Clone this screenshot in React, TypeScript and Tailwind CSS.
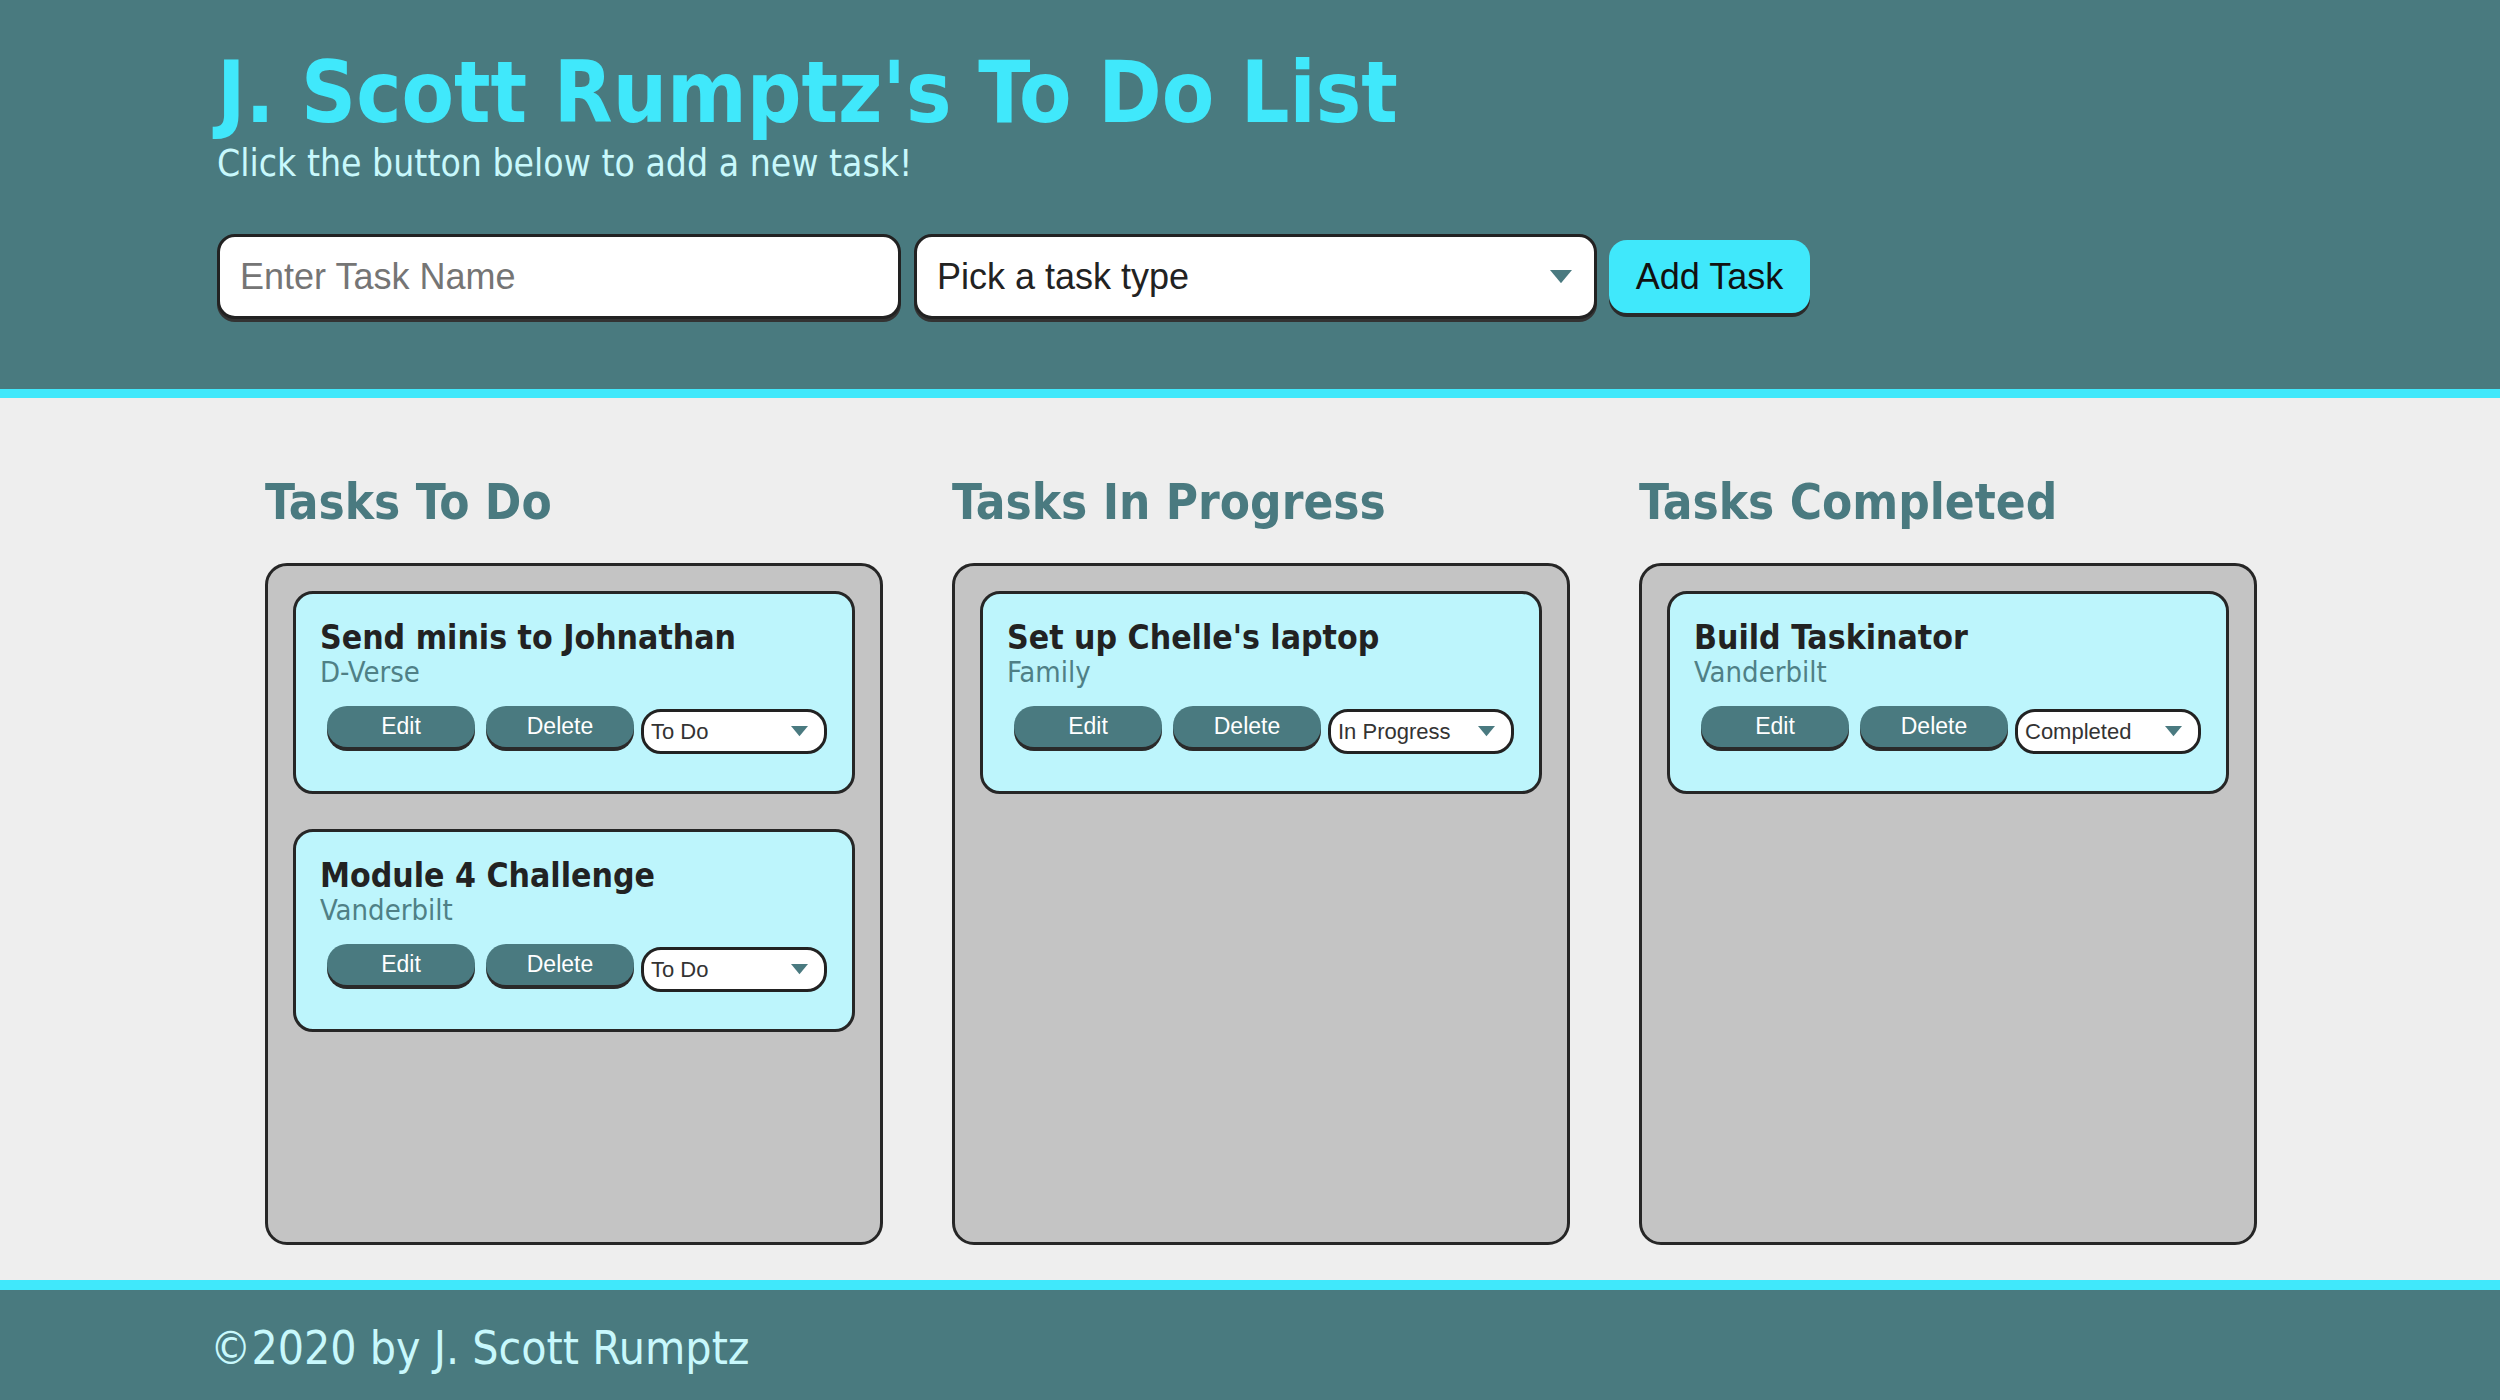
import type { ReactNode } from "react";

const HEAD = { fontFamily: '"DejaVu Sans Condensed", "DejaVu Sans", Verdana, sans-serif' };
const ARIAL = { fontFamily: '"Liberation Sans", Arial, sans-serif' };

type Task = { name: string; type: string; status: string };

const columns: { title: string; tasks: Task[] }[] = [
  {
    title: "Tasks To Do",
    tasks: [
      { name: "Send minis to Johnathan", type: "D-Verse", status: "To Do" },
      { name: "Module 4 Challenge", type: "Vanderbilt", status: "To Do" },
    ],
  },
  {
    title: "Tasks In Progress",
    tasks: [{ name: "Set up Chelle's laptop", type: "Family", status: "In Progress" }],
  },
  {
    title: "Tasks Completed",
    tasks: [{ name: "Build Taskinator", type: "Vanderbilt", status: "Completed" }],
  },
];

function Caret({ size = 14 }: { size?: number }) {
  return (
    <svg width={size} height={size * 0.6} viewBox="0 0 10 6" className="shrink-0">
      <path d="M0 0 L10 0 L5 6 Z" fill="#4a7a80" />
    </svg>
  );
}

function SmallBtn({ children }: { children: ReactNode }) {
  return (
    <button
      style={ARIAL}
      className="h-[41px] w-[148px] rounded-[20px] bg-[#4a7a80] text-[23px] text-white shadow-[0_4px_0_#2a2a2a]"
    >
      {children}
    </button>
  );
}

function TaskCard({ task }: { task: Task }) {
  return (
    <div className="h-[203px] rounded-[20px] border-[3px] border-[#262626] bg-[#bdf5fc] pl-[24px] pr-[20px] pt-[26px]">
      <h3 style={HEAD} className="text-[33.5px] font-bold leading-[36px] text-[#222]">
        {task.name}
      </h3>
      <p style={HEAD} className="text-[29px] leading-[32px] text-[#4f8086]">
        {task.type}
      </p>
      <div className="mt-[18px] flex items-start pl-[7px]">
        <SmallBtn>Edit</SmallBtn>
        <div className="w-[11px]" />
        <SmallBtn>Delete</SmallBtn>
        <div className="w-[7px]" />
        <div
          style={ARIAL}
          className="mt-[3px] flex h-[45px] w-[186px] items-center justify-between rounded-[20px] border-[3px] border-[#222] bg-white pl-[7px] pr-[16px] text-[22px] text-[#333]"
        >
          <span>{task.status}</span>
          <Caret size={17} />
        </div>
      </div>
    </div>
  );
}

export default function App() {
  return (
    <div className="flex min-h-screen flex-col bg-[#eeeeee]">
      <header className="h-[398px] shrink-0 border-b-[9px] border-[#40e8fb] bg-[#497a7f] pl-[217px] pt-[50px]">
        <h1 style={HEAD} className="text-[85px] font-bold leading-none text-[#40e8fb]">
          J. Scott Rumptz's To Do List
        </h1>
        <p style={HEAD} className="mt-[9px] text-[37px] leading-[40px] text-[#c8f8fc]">
          Click the button below to add a new task!
        </p>
        <div className="mt-[50px] flex items-center">
          <input
            style={ARIAL}
            placeholder="Enter Task Name"
            className="h-[85px] w-[684px] rounded-[18px] border-[3px] border-[#222] bg-white px-[20px] text-[36px] text-[#222] shadow-[0_3px_0_#333] outline-none placeholder:text-[#757575]"
          />
          <div
            style={ARIAL}
            className="ml-[13px] flex h-[85px] w-[683px] items-center justify-between rounded-[18px] border-[3px] border-[#222] bg-white pl-[20px] pr-[22px] text-[36px] text-[#222] shadow-[0_3px_0_#333]"
          >
            <span>Pick a task type</span>
            <Caret size={22} />
          </div>
          <button
            style={ARIAL}
            className="ml-[12px] h-[73px] w-[201px] rounded-[18px] bg-[#40e8fb] text-[36px] text-[#111] shadow-[0_4px_0_#2a2a2a]"
          >
            Add Task
          </button>
        </div>
      </header>

      <main className="flex-1 pl-[265px] pt-[80px]">
        <div className="grid grid-cols-[618px_618px_618px] gap-x-[69px]">
          {columns.map((col) => (
            <section key={col.title}>
              <h2 style={HEAD} className="h-[85px] text-[49px] font-bold leading-[49px] text-[#4a7a80]">
                {col.title}
              </h2>
              <div className="flex h-[682px] flex-col gap-[35px] rounded-[22px] border-[3px] border-[#262626] bg-[#c4c4c4] p-[25px]">
                {col.tasks.map((t) => (
                  <TaskCard key={t.name} task={t} />
                ))}
              </div>
            </section>
          ))}
        </div>
      </main>

      <footer className="flex h-[120px] shrink-0 items-center border-t-[10px] border-[#40e8fb] bg-[#497a7f] pl-[210px] pt-[6px]">
        <p style={HEAD} className="text-[46px] text-[#c8f8fc]">
          ©2020 by J. Scott Rumptz
        </p>
      </footer>
    </div>
  );
}
